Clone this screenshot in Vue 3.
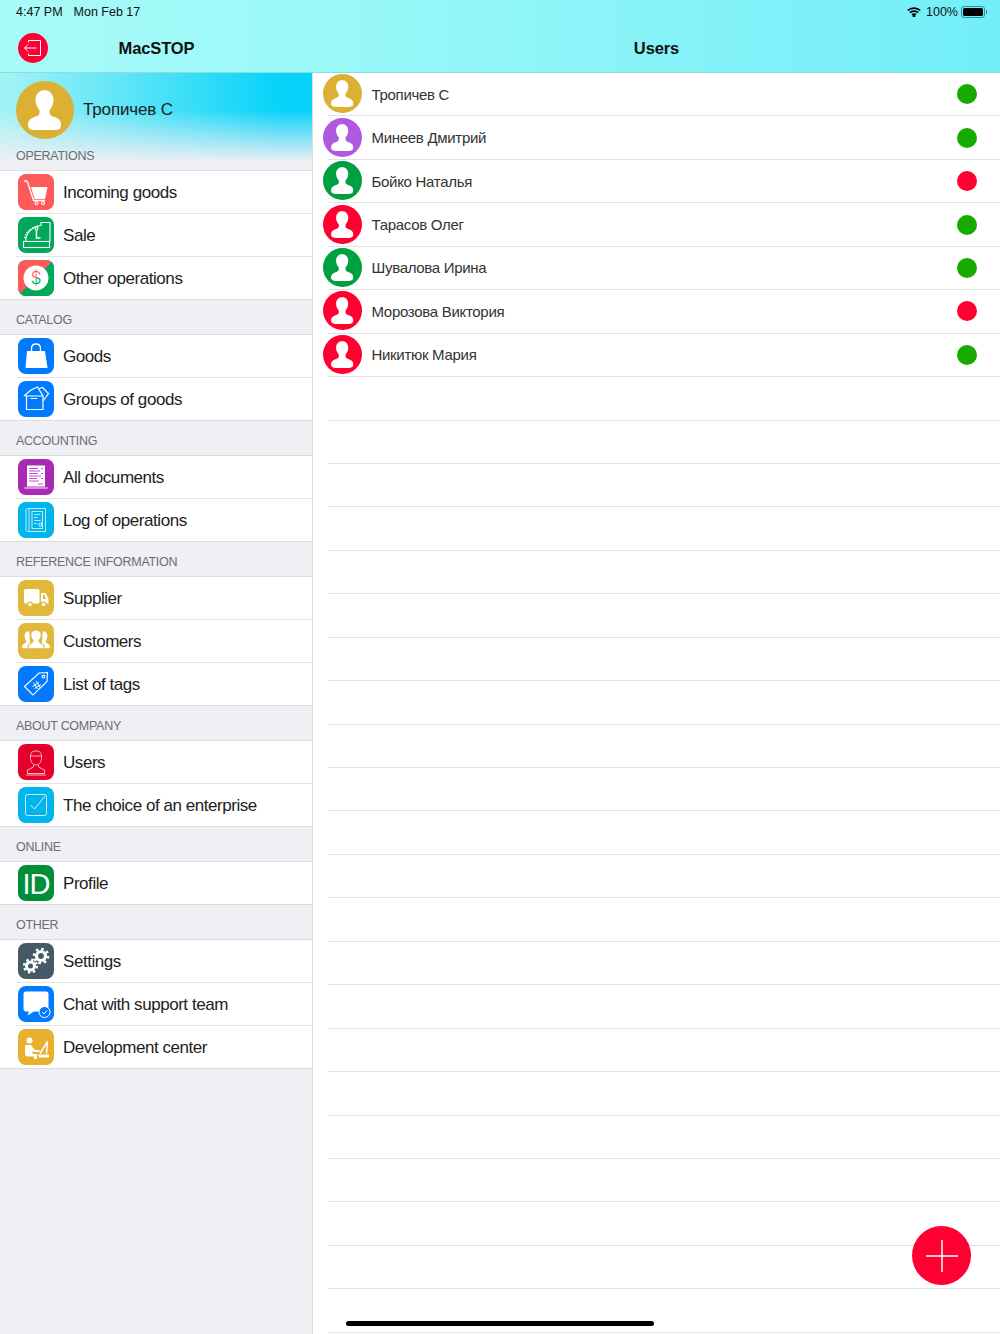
<template>
  <div class="screen">
    <aside class="sidebar">
      <header class="bar">
        <div class="status">
          <span>4:47 PM</span>
          <span>Mon Feb 17</span>
        </div>
        <div class="nav">
          <button class="exit">
            <svg width="30" height="30" viewBox="0 0 30 30" fill="none" stroke="#fff" stroke-width="1">
              <path d="M10.500 9.500V7.500H22.500V22.500H10.500V20.500" />
              <path d="M18.500 15H6.500M10 11.500L6.500 15L10 18.500" />
            </svg>
          </button>
          <h1>MacSTOP</h1>
        </div>
      </header>

      <div class="profile">
        <div class="me">
          <svg class="avatar" width="58" height="58" viewBox="0 0 58 58">
            <circle cx="29" cy="29" r="29" fill="#dcb032" />
            <path :d="person" fill="#fff" />
          </svg>
          <span>Тропичев С</span>
        </div>
        <p class="caption first">OPERATIONS</p>
      </div>

      <template v-for="group in groups" :key="group.title">
        <p v-if="group.title !== 'OPERATIONS'" class="caption">{{ group.title }}</p>
        <ul class="menu">
          <li v-for="item in group.items" :key="item.label">
            <svg class="icon" width="36" height="36" viewBox="0 0 36 36" :style="{ background: item.color }">
              <g v-if="item.icon === 'cart'">
                <path d="M6 7H8.500L9.800 8.500L15.500 26.500H27" fill="none" stroke="#fff" stroke-width="1.300" />
                <path d="M13 13H29.500L27 25H16.500Z" fill="#fff" />
                <g fill="none" stroke="#fff" stroke-width="1.100">
                  <circle cx="18.500" cy="29" r="1.500" />
                  <circle cx="25" cy="29" r="1.500" />
                </g>
              </g>
              <g v-else-if="item.icon === 'register'" fill="none" stroke="#fff" stroke-width="1.100">
                <rect x="5.500" y="24.500" width="26" height="6" />
                <path d="M7.500 24.500C8 16 14 9.500 23 8.500V5.500H32V24.500" />
                <path d="M7 21C8 15 13 10.500 21 9.500" stroke-width="2.200" stroke-dasharray="1 1.500" />
                <circle cx="18.500" cy="11.500" r="1.500" />
                <path d="M18.500 13V21H22.500" stroke-width="1.500" />
              </g>
              <g v-else-if="item.icon === 'exchange'">
                <path d="M0 36L36 0H0Z" fill="#ff5a5a" />
                <path d="M0 36L36 0V36Z" fill="#00a85a" />
                <circle cx="18" cy="18" r="12.500" fill="#fff" />
                <text x="18" y="24" text-anchor="middle" class="dollar" fill="url(#dollar)">$</text>
                <defs>
                  <linearGradient id="dollar" x1="0" y1="0" x2="0" y2="1">
                    <stop offset="0.500" stop-color="#ff5a5a" />
                    <stop offset="0.500" stop-color="#00a85a" />
                  </linearGradient>
                </defs>
              </g>
              <g v-else-if="item.icon === 'bag'">
                <path d="M9 13H27L29.500 30H7.500Z" fill="#fff" />
                <path d="M13.500 16V10.500C13.500 4.500 22.500 4.500 22.500 10.500V16" fill="none" stroke="#fff" stroke-width="1.300" />
              </g>
              <g v-else-if="item.icon === 'box'" fill="none" stroke="#fff" stroke-width="1.200">
                <path d="M8.500 15V28.500H25V15H8.500L6.500 14.500L13 9L19.500 6L25 15" />
                <path d="M21 7.500L24.500 6.500L30.500 12.500L25 20" />
                <path d="M12.500 17.500H19" />
              </g>
              <g v-else-if="item.icon === 'doc'">
                <rect x="9" y="6.500" width="18" height="21" fill="#fff" />
                <path d="M6.500 29H29.500" stroke="#fff" stroke-width="1.200" />
                <path d="M11 9.500H20M11 12H22M11 14.500H20M11 17H23M11 19.500H19M11 22H21M20 25H25" stroke="#c84ad6" stroke-width="1.200" />
                <path d="M23 9.500H25M23 14.500H25M23 19.500H25" stroke="#c84ad6" stroke-width="1.200" />
              </g>
              <g v-else-if="item.icon === 'log'" fill="none" stroke="#bfeaf8" stroke-width="1">
                <path d="M9.500 6.500H27.500V29.500H9.500C8 29.500 8 28.500 8 27.500V8C8 7 8.500 6.500 9.500 6.500Z" />
                <path d="M11 6.500V29.500" />
                <rect x="14" y="9.500" width="10.500" height="17" />
                <path d="M16 12.500H22.500M16 15.500H20M16 18.500H22.500M16 21.500H19M21 21H23.500V24H21Z" />
              </g>
              <g v-else-if="item.icon === 'truck'" fill="#fff">
                <rect x="6" y="9" width="15.500" height="14.500" rx="1.500" />
                <path d="M23 13H26.500C27.500 13 28 13.500 28.500 14.500L30.500 19V23.500H23ZM25 15V19H28L26.500 15Z" fill-rule="evenodd" />
                <circle cx="12" cy="24.500" r="2.400" stroke="#e0b83a" stroke-width="1.200" />
                <circle cx="25.500" cy="24.500" r="2.400" stroke="#e0b83a" stroke-width="1.200" />
              </g>
              <g v-else-if="item.icon === 'people'" fill="#fff" transform="translate(0.900 1.500) scale(0.950 0.850)">
                <path d="M11 8C7.500 8 6 10.500 6 13.500C6 16 7 18 8 19.500C8 21.500 4.500 22.500 3.500 25C3 26.500 3.500 28 5 28H12Z" />
                <path d="M25 8C28.500 8 30 10.500 30 13.500C30 16 29 18 28 19.500C28 21.500 31.500 22.500 32.500 25C33 26.500 32.500 28 31 28H24Z" />
                <path d="M18 6.500C14.500 6.500 12.500 9 12.500 12.500C12.500 15 13.500 17.500 15 19C15 21.500 11 22 9.800 25C9.200 27 10 28.500 11.500 28.500H24.500C26 28.500 26.800 27 26.200 25C25 22 21 21.500 21 19C22.500 17.500 23.500 15 23.500 12.500C23.500 9 21.500 6.500 18 6.500Z" stroke="#e0b83a" stroke-width="1.100" />
              </g>
              <g v-else-if="item.icon === 'tag'" fill="none" stroke="#fff" stroke-width="1.100">
                <path d="M6.500 20.500L21 7L29.500 6.500L29 15.500L15 29Z" />
                <circle cx="25.500" cy="10.500" r="1.400" />
                <path d="M15.500 16.500L19.500 23M18 15L22 21.500M14.500 20.500L21 16.500M16.500 22.500L23 18.500" stroke-width="1" />
              </g>
              <g v-else-if="item.icon === 'man'" fill="none" stroke="#ffb0bd" stroke-width="1">
                <path d="M12.500 12C12.500 8 15 7 18 7C21 7 23.500 8 23.500 12" />
                <path d="M12.500 12H23.500C24 17.500 21.500 21 18 21C14.500 21 12 17.500 12.500 12Z" />
                <path d="M15.500 21V23L9.500 26V29.500H26.500V26L20.500 23V21" />
                <path d="M8 31H28" />
              </g>
              <g v-else-if="item.icon === 'check'" fill="none" stroke="#d6f3fc" stroke-width="1">
                <rect x="7.500" y="7.500" width="21" height="21" rx="2" />
                <path d="M12.500 18L16.500 22L27 9" />
              </g>
              <text v-else-if="item.icon === 'id'" x="18" y="28.500" text-anchor="middle" class="id-mark">ID</text>
              <g v-else-if="item.icon === 'gears'" fill="none" stroke="#fff">
                <circle cx="23" cy="13" r="4.500" stroke-width="3.200" />
                <circle cx="23" cy="13" r="7" stroke-width="2.600" stroke-dasharray="2.500 3" />
                <circle cx="12.500" cy="23" r="4" stroke-width="3" />
                <circle cx="12.500" cy="23" r="6.400" stroke-width="2.400" stroke-dasharray="2.300 2.730" />
              </g>
              <g v-else-if="item.icon === 'chat'">
                <path d="M8 5.500H28C29.500 5.500 30.500 6.500 30.500 8V23C30.500 24.500 29.500 25.500 28 25.500H16L9.500 29.500L11 25.500H8C6.500 25.500 5.500 24.500 5.500 23V8C5.500 6.500 6.500 5.500 8 5.500Z" fill="#fff" />
                <circle cx="26.500" cy="26" r="5.500" fill="#007aff" stroke="#fff" stroke-width="1" />
                <path d="M24 26L26 28L29 24.500" fill="none" stroke="#fff" stroke-width="1" />
              </g>
              <g v-else-if="item.icon === 'desk'" fill="#fff">
                <circle cx="11.500" cy="11.500" r="3" />
                <path d="M7 16H13L17 21H21.500V23H16L14.500 21.500V25H19V30H16V27.500H9.500C8 27.500 7 26.500 7 25Z" />
                <path d="M19.500 25.500H31V28.500H21.500Z" />
                <path d="M22 24.500L29.500 12.500L28.500 24.500" fill="none" stroke="#fff" stroke-width="1.500" />
              </g>
            </svg>
            <span class="label">{{ item.label }}</span>
          </li>
        </ul>
      </template>
    </aside>

    <main class="content">
      <header class="bar">
        <div class="status right">
          <svg width="14" height="10" viewBox="0 0 14 10" fill="none" stroke="#000" stroke-width="1.700">
            <path d="M0.800 3.500C4 0.300 10 0.300 13.200 3.500M2.900 5.700C5 3.700 9 3.700 11.100 5.700M5 7.700C6 6.800 8 6.800 9 7.700" />
            <circle cx="7" cy="9" r="0.600" fill="#000" />
          </svg>
          <span>100%</span>
          <span class="battery"><i></i></span>
        </div>
        <div class="nav">
          <h1>Users</h1>
        </div>
      </header>

      <ul class="users">
        <li v-for="n in 29" :key="n">
          <template v-if="users[n - 1]">
            <svg class="face" width="39" height="39" viewBox="0 0 58 58">
              <circle cx="29" cy="29" r="29" :fill="users[n - 1].color" />
              <path :d="person" fill="#fff" />
            </svg>
            <span class="name">{{ users[n - 1].name }}</span>
            <span class="dot" :class="{ off: !users[n - 1].online }"></span>
          </template>
        </li>
      </ul>

      <button class="fab">
        <svg width="32" height="32" viewBox="0 0 32 32" stroke="#fff" stroke-width="1.500">
          <path d="M0 16H32M16 0V32" />
        </svg>
      </button>
      <div class="home"></div>
    </main>
  </div>
</template>

<script setup>
const person = 'M29 9c-6 0-9.500 4.500-9.500 10 0 4 1.500 7.500 4 10v3c0 2-2 3-5 4-5 2-6.500 4-6.500 8 0 3 2 5 6 5h21c4 0 6-2 6-5 0-4-1.500-6-6.500-8-3-1-5-2-5-4v-3c2.500-2.500 4-6 4-10 0-5.500-3.500-10-9.500-10z'

const red = '#ff5a5a'
const green = '#00a85a'
const blue = '#007aff'
const gold = '#e0b83a'
const cyan = '#00b4ec'

const groups = [
  {
    title: 'OPERATIONS',
    items: [
      { label: 'Incoming goods', icon: 'cart', color: red },
      { label: 'Sale', icon: 'register', color: green },
      { label: 'Other operations', icon: 'exchange', color: green }
    ]
  },
  {
    title: 'CATALOG',
    items: [
      { label: 'Goods', icon: 'bag', color: blue },
      { label: 'Groups of goods', icon: 'box', color: blue }
    ]
  },
  {
    title: 'ACCOUNTING',
    items: [
      { label: 'All documents', icon: 'doc', color: '#a928b4' },
      { label: 'Log of operations', icon: 'log', color: cyan }
    ]
  },
  {
    title: 'REFERENCE INFORMATION',
    items: [
      { label: 'Supplier', icon: 'truck', color: gold },
      { label: 'Customers', icon: 'people', color: gold },
      { label: 'List of tags', icon: 'tag', color: blue }
    ]
  },
  {
    title: 'ABOUT COMPANY',
    items: [
      { label: 'Users', icon: 'man', color: '#e4002b' },
      { label: 'The choice of an enterprise', icon: 'check', color: cyan }
    ]
  },
  {
    title: 'ONLINE',
    items: [{ label: 'Profile', icon: 'id', color: '#008f39' }]
  },
  {
    title: 'OTHER',
    items: [
      { label: 'Settings', icon: 'gears', color: '#455a66' },
      { label: 'Chat with support team', icon: 'chat', color: blue },
      { label: 'Development center', icon: 'desk', color: '#e8b02e' }
    ]
  }
]

const users = [
  { name: 'Тропичев С', color: '#dcb032', online: true },
  { name: 'Минеев Дмитрий', color: '#b158e0', online: true },
  { name: 'Бойко Наталья', color: '#009f3f', online: false },
  { name: 'Тарасов Олег', color: '#ff0030', online: true },
  { name: 'Шувалова Ирина', color: '#009f3f', online: true },
  { name: 'Морозова Виктория', color: '#ff0030', online: false },
  { name: 'Никитюк Мария', color: '#ff0030', online: true }
]
</script>

<style>
body {
  background: #fff;
}
</style>

<style scoped>
* {
  box-sizing: border-box;
}

.screen {
  display: flex;
  width: 1000px;
  height: 1334px;
  overflow: hidden;
  font-family: "Liberation Sans", Arial, sans-serif;
  color: #222;
}

.sidebar {
  width: 313px;
  flex: none;
  background: #efeff4;
  border-right: 1px solid #dcdce0;
}

.content {
  position: relative;
  flex: 1;
  min-width: 0;
  background: #fff;
}

.bar {
  height: 73px;
  border-bottom: 1px solid #8fdcdf;
}

.sidebar .bar {
  width: 313px;
  margin-right: -1px;
  background: linear-gradient(to right, #a8fbf8, #9bf8f8);
}

.content .bar {
  background: linear-gradient(to right, #9bf8f8, #72eef8);
}

.status {
  display: flex;
  align-items: center;
  gap: 11px;
  height: 23px;
  padding-left: 16px;
  font-size: 12.500px;
  color: #111;
}

.status.right {
  justify-content: flex-end;
  gap: 5px;
  padding-right: 15px;
}

.battery {
  position: relative;
  width: 24px;
  height: 12px;
  margin-left: -2px;
  border: 1px solid #2f8f9c;
  border-radius: 3px;
  padding: 1px;
}

.battery i {
  display: block;
  height: 100%;
  background: #000;
  border-radius: 1.500px;
}

.battery::after {
  content: "";
  position: absolute;
  right: -3px;
  top: 3px;
  width: 1.500px;
  height: 4px;
  background: #2f8f9c;
}

.nav {
  position: relative;
  height: 49px;
  display: flex;
  align-items: center;
  justify-content: center;
}

.nav h1 {
  margin: 0;
  padding-top: 1px;
  font-size: 16.500px;
  letter-spacing: -0.100px;
  font-weight: 700;
  color: #111;
}

.exit {
  position: absolute;
  left: 18px;
  top: 10px;
  width: 30px;
  height: 30px;
  padding: 0;
  border: 0;
  border-radius: 50%;
  background: #ff0033;
}

.exit svg,
.fab svg {
  display: block;
}

.profile {
  height: 97px;
  padding-top: 7px;
  background:
    linear-gradient(to bottom, rgba(239, 239, 244, 0) 38%, #efeff4 92%),
    linear-gradient(to right, #a5f3f6, #06d3f9 90%);
}

.me {
  display: flex;
  align-items: center;
  gap: 9px;
  height: 59px;
  padding-left: 16px;
  font-size: 17px;
  letter-spacing: -0.150px;
}

.caption {
  display: flex;
  align-items: flex-end;
  height: 35px;
  margin: 0;
  padding: 0 0 7px 16px;
  font-size: 12.500px;
  letter-spacing: -0.280px;
  color: #6d6d72;
}

.caption.first {
  height: 31px;
}

.menu {
  margin: 0;
  padding: 0;
  list-style: none;
  background: #fff;
  border-top: 1px solid #dcdce0;
  border-bottom: 1px solid #dcdce0;
  margin-bottom: -1px;
}

.menu li {
  display: flex;
  align-items: center;
  gap: 9px;
  height: 43px;
  margin-left: 16px;
  padding-left: 2px;
  font-size: 17px;
  letter-spacing: -0.450px;
  border-bottom: 1px solid #e4e4e6;
}

.menu li:last-child {
  height: 42px;
  border-bottom: 0;
}

.label {
  padding-top: 2px;
}

.icon {
  flex: none;
  border-radius: 8px;
}

.dollar {
  font-size: 17px;
  font-family: Inter, "Liberation Sans", sans-serif;
  font-weight: 300;
}

.id-mark {
  font-size: 29px;
  letter-spacing: -1px;
  fill: #fff;
  font-family: "Liberation Sans", Arial, sans-serif;
}

.users {
  margin: 0;
  padding: 0;
  list-style: none;
}

.users li {
  display: flex;
  align-items: center;
  height: 43.450px;
  margin-left: 15px;
  border-bottom: 1px solid #e2e2e4;
}

.face {
  flex: none;
  margin-left: -5px;
  margin-top: -1px;
}

.name {
  flex: 1;
  margin-left: 9.500px;
  font-size: 15px;
  letter-spacing: -0.300px;
  color: #333;
}

.dot {
  width: 20px;
  height: 20px;
  margin-right: 23px;
  border-radius: 50%;
  background: #17ab00;
}

.dot.off {
  background: #ff0030;
}

.fab {
  position: absolute;
  left: 599px;
  top: 1226px;
  display: flex;
  align-items: center;
  justify-content: center;
  width: 59px;
  height: 59px;
  padding: 0;
  border: 0;
  border-radius: 50%;
  background: #ff0033;
}

.home {
  position: absolute;
  left: 33px;
  top: 1321px;
  width: 308px;
  height: 5px;
  border-radius: 3px;
  background: #000;
}
</style>
